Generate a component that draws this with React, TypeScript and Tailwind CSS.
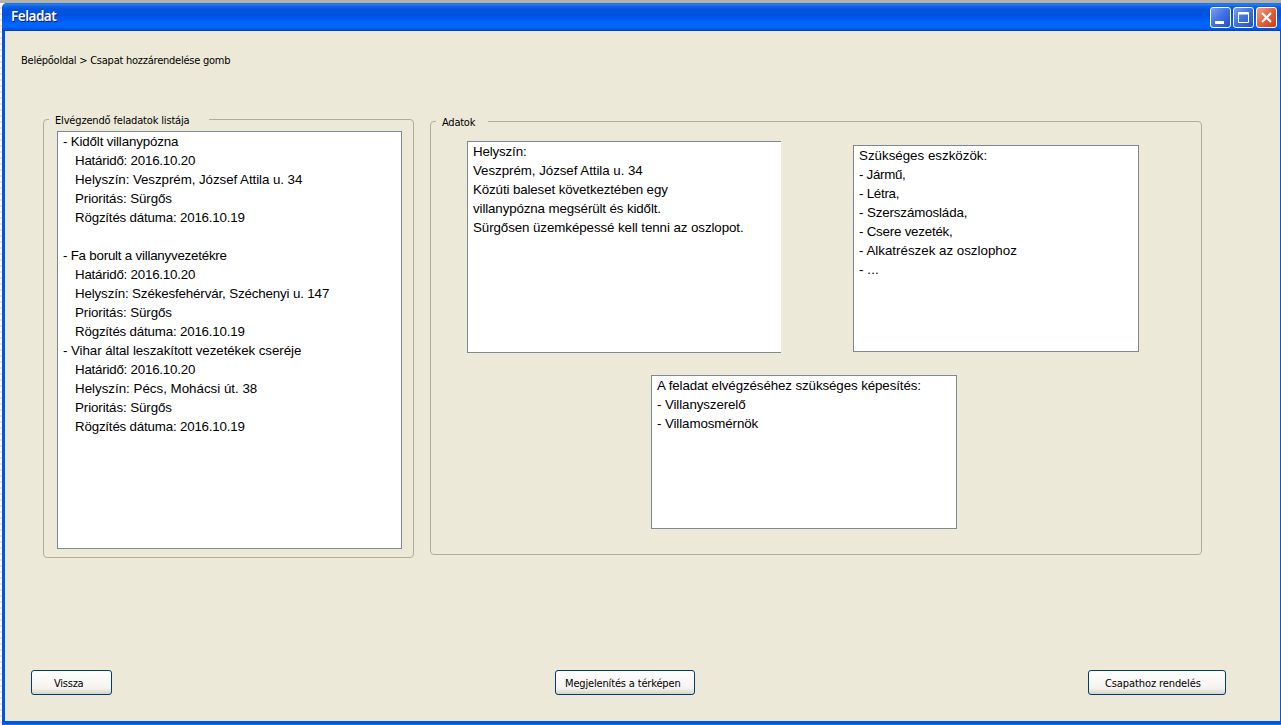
import type { ReactNode } from "react";

type Line = { text: string; track: string };

const tasks: Line[] = [
  { text: "- Kidőlt villanypózna", track: "tracking-[-0.16px]" },
  { text: "Határidő: 2016.10.20", track: "pl-[12px] tracking-[-0.22px]" },
  { text: "Helyszín: Veszprém, József Attila u. 34", track: "pl-[12px] tracking-[-0.06px]" },
  { text: "Prioritás: Sürgős", track: "pl-[12px] tracking-[-0.1px]" },
  { text: "Rögzítés dátuma: 2016.10.19", track: "pl-[12px] tracking-[-0.19px]" },
  { text: "", track: "" },
  { text: "- Fa borult a villanyvezetékre", track: "tracking-[-0.22px]" },
  { text: "Határidő: 2016.10.20", track: "pl-[12px] tracking-[-0.22px]" },
  { text: "Helyszín: Székesfehérvár, Széchenyi u. 147", track: "pl-[12px] tracking-[-0.14px]" },
  { text: "Prioritás: Sürgős", track: "pl-[12px] tracking-[-0.1px]" },
  { text: "Rögzítés dátuma: 2016.10.19", track: "pl-[12px] tracking-[-0.19px]" },
  { text: "- Vihar által leszakított vezetékek cseréje", track: "tracking-[-0.07px]" },
  { text: "Határidő: 2016.10.20", track: "pl-[12px] tracking-[-0.22px]" },
  { text: "Helyszín: Pécs, Mohácsi út. 38", track: "pl-[12px] tracking-[0px]" },
  { text: "Prioritás: Sürgős", track: "pl-[12px] tracking-[-0.1px]" },
  { text: "Rögzítés dátuma: 2016.10.19", track: "pl-[12px] tracking-[-0.19px]" },
];

const location: Line[] = [
  { text: "Helyszín:", track: "tracking-[-0.15px]" },
  { text: "Veszprém, József Attila u. 34", track: "tracking-[-0.05px]" },
  { text: "Közúti baleset következtében egy", track: "tracking-[-0.12px]" },
  { text: "villanypózna megsérült és kidőlt.", track: "tracking-[-0.12px]" },
  { text: "Sürgősen üzemképessé kell tenni az oszlopot.", track: "tracking-[-0.08px]" },
];

const tools: Line[] = [
  { text: "Szükséges eszközök:", track: "tracking-[0px]" },
  { text: "- Jármű,", track: "tracking-[-0.3px]" },
  { text: "- Létra,", track: "tracking-[-0.25px]" },
  { text: "- Szerszámosláda,", track: "tracking-[-0.12px]" },
  { text: "- Csere vezeték,", track: "tracking-[-0.22px]" },
  { text: "- Alkatrészek az oszlophoz", track: "tracking-[0px]" },
  { text: "- ...", track: "tracking-[0.1px]" },
];

const skills: Line[] = [
  { text: "A feladat elvégzéséhez szükséges képesítés:", track: "tracking-[-0.1px]" },
  { text: "- Villanyszerelő", track: "tracking-[-0.1px]" },
  { text: "- Villamosmérnök", track: "tracking-[-0.1px]" },
];

function TextBox({ lines, className }: { lines: Line[]; className: string }) {
  return (
    <div
      className={`border border-[#7f8793] bg-white pl-[5px] font-['Liberation_Sans',Arial,sans-serif] text-[13.33px] leading-[19px] text-black ${className}`}
    >
      {lines.map((line, i) => (
        <div key={i} className={`h-[19px] whitespace-pre ${line.track}`}>
          {line.text}
        </div>
      ))}
    </div>
  );
}

function Group({ title, legend, className, children }: { title: string; legend: string; className: string; children: ReactNode }) {
  return (
    <fieldset className={`min-w-0 rounded-[4px] border border-[#b0ad9c] ${className}`}>
      <legend className={`h-[13px] whitespace-nowrap pt-px leading-[13px] ${legend}`}>{title}</legend>
      {children}
    </fieldset>
  );
}

function PushButton({ label, className }: { label: string; className: string }) {
  return (
    <button
      className={`h-[25px] whitespace-nowrap rounded-[3px] border border-[#003c74] bg-linear-to-b from-white via-[#f4f3ee] via-75% to-[#d8d3c8] pt-[2px] text-left leading-[21px] ${className}`}
    >
      <span className="block h-[21px] leading-[22px]">{label}</span>
    </button>
  );
}

function CaptionButton({ className, children }: { className: string; children: ReactNode }) {
  return (
    <button className={`h-[21px] w-[21px] rounded-[3px] border border-white ${className}`}>
      <svg viewBox="0 0 19 19" className="block h-[19px] w-[19px]">
        {children}
      </svg>
    </button>
  );
}

export default function App() {
  return (
    <div className="flex h-[725px] w-[1281px] flex-col overflow-hidden bg-white font-['DejaVu_Sans_Condensed','DejaVu_Sans',Tahoma,sans-serif] text-[11px] tracking-[-0.24px] text-black">
      <div className="h-[3px] shrink-0 bg-[#b5b2ad]" />
      <div className="flex flex-1">
        <div className="w-[2px] bg-[repeating-linear-gradient(to_bottom,#ffffff_0px,#ffffff_4px,#e6e6e6_4px,#e6e6e6_6px)]" />
        <div className="flex flex-1 flex-col rounded-tl-[5px] border-b border-[#0a78dc] bg-[#0054e3]">
          <header className="flex h-[28px] items-start justify-between rounded-tl-[5px] bg-[linear-gradient(to_bottom,#0a6bc9_0px,#2a82ea_1px,#1268ee_3px,#0553dc_6px,#0052e0_12px,#0062fb_19px,#0066ff_23px,#005ff0_25px,#0040c0_28px)] pl-[9px] pr-[4px] pt-[4px]">
            <h1 className="pt-[1px] font-['Noto_Sans','DejaVu_Sans',sans-serif] text-[13.5px] font-semibold leading-[17px] tracking-[-0.5px] text-white [text-shadow:1px_1px_0_#0a1883]">
              Feladat
            </h1>
            <div className="flex gap-[2px]">
              <CaptionButton className="bg-linear-to-br from-[#7ba0f0] via-[#3f6fe2] to-[#2350c8]">
                <rect x="4" y="13" width="9" height="3" fill="#fff" />
              </CaptionButton>
              <CaptionButton className="bg-linear-to-br from-[#7ba0f0] via-[#3f6fe2] to-[#2350c8]">
                <path d="M4.5 4.5h10v10h-10zM4 5.5h11" fill="none" stroke="#fff" />
                <path d="M4 6.5h11" stroke="#fff" strokeOpacity="0.5" />
              </CaptionButton>
              <CaptionButton className="bg-linear-to-br from-[#f0a088] via-[#e3603c] to-[#c83c10]">
                <path d="M5 5l9 9M14 5l-9 9" stroke="#fff" strokeWidth="2.2" />
              </CaptionButton>
            </div>
          </header>
          <main className="mb-[3px] ml-[3px] mr-px flex flex-1 flex-col bg-[#ece9d8]">
            <nav className="pl-[16px] pt-[23px] leading-[14px]">Belépőoldal &gt; Csapat hozzárendelése gomb</nav>
            <div className="mt-[45px] flex items-start gap-[16px] pl-[38px]">
              <Group title="Elvégzendő feladatok listája" legend="ml-[5px] w-[160px] pl-[6px] tracking-[-0.17px]" className="h-[445px] w-[371px]">
                <TextBox lines={tasks} className="ml-[13px] mt-[5px] h-[418px] w-[345px]" />
              </Group>
              <Group title="Adatok" legend="ml-[5px] w-[52px] pl-[6px]" className="mt-[2px] h-[440px] w-[772px]">
                <div className="flex h-[247px] items-start gap-[72px] pl-[36px] pt-[13px]">
                  <TextBox lines={location} className="h-[212px] w-[314px] border-r-0" />
                  <TextBox lines={tools} className="mt-[4px] h-[207px] w-[286px]" />
                </div>
                <TextBox lines={skills} className="ml-[220px] h-[154px] w-[306px]" />
              </Group>
            </div>
            <footer className="mt-[112px] flex pl-[26px]">
              <PushButton label="Vissza" className="w-[81px] pl-[22px]" />
              <PushButton label="Megjelenítés a térképen" className="ml-[443px] w-[140px] pl-[9px] tracking-[-0.16px]" />
              <PushButton label="Csapathoz rendelés" className="ml-[393px] w-[138px] pl-[16px] tracking-[-0.1px]" />
            </footer>
          </main>
        </div>
      </div>
    </div>
  );
}
